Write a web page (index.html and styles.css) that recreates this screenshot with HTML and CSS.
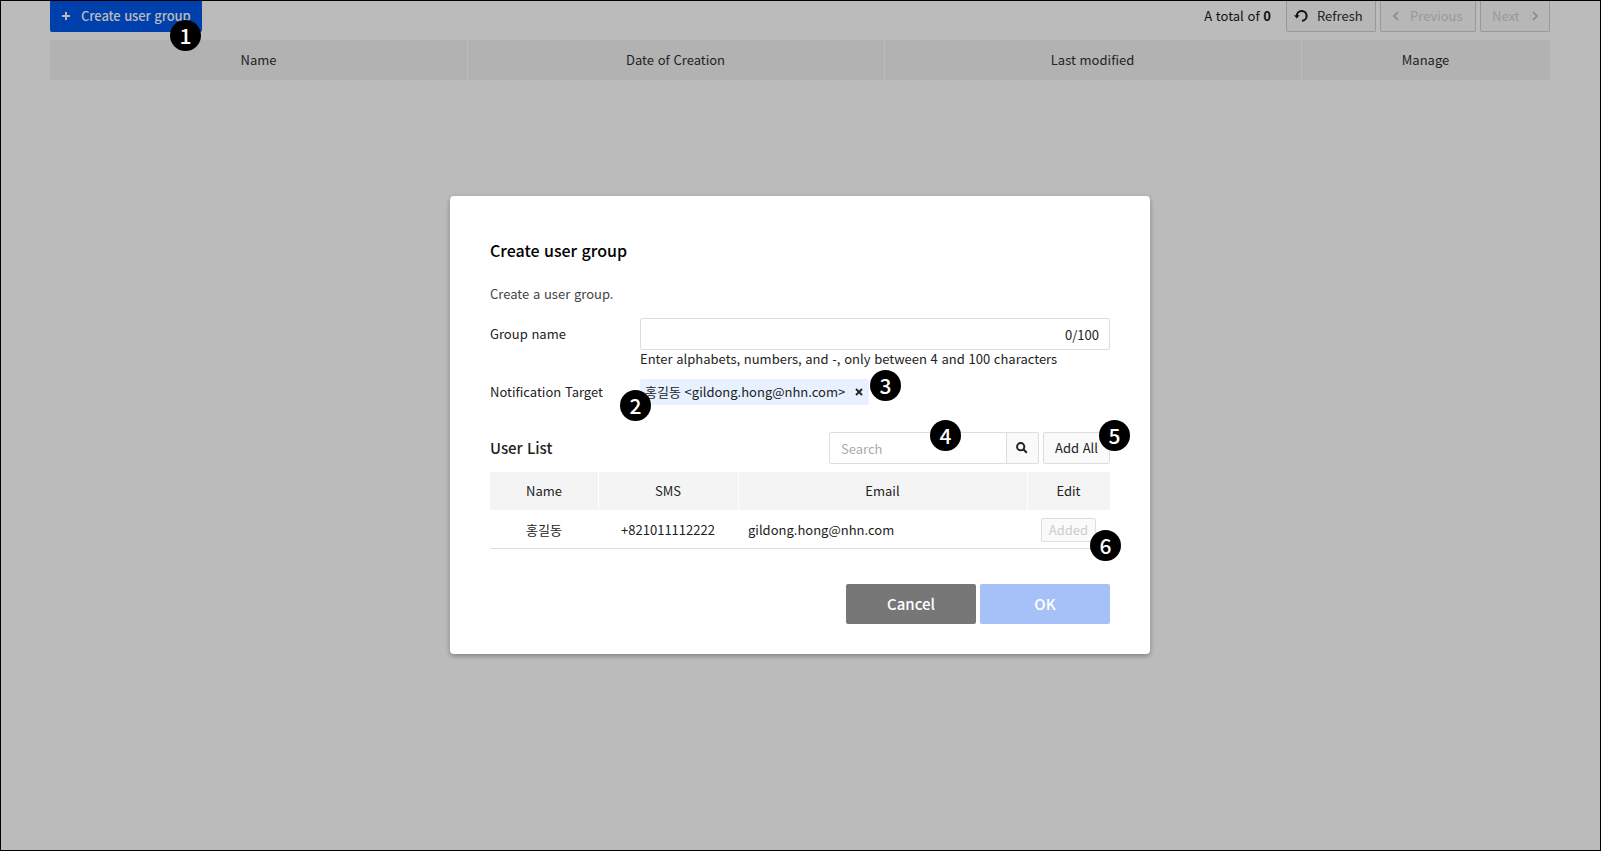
FILE: index.html
```html
<!DOCTYPE html>
<html lang="en">
<head>
<meta charset="utf-8">
<title>Create user group</title>
<link rel="stylesheet" href="styles.css">
</head>
<body>
<main class="page">
  <div class="toolbar">
    <button class="btn-create"><svg class="ico-plus" viewBox="0 0 8 8"><path d="M4 0v8M0 4h8"/></svg><span>Create user group</span></button>
    <span class="total">A total of <b>0</b></span>
    <button class="tool refresh"><svg class="ico-refresh" viewBox="0 0 14 14"><path d="M2.8 7.6V6.9a4.9 4.9 0 1 1 5.2 4.9" /><path class="fill" d="M0 6.2h5.6L2.8 9.4z"/></svg><span>Refresh</span></button>
    <button class="tool prev off"><svg class="ico-chev" viewBox="0 0 6 10"><path d="M5 1 1 5l4 4"/></svg><span>Previous</span></button>
    <button class="tool next off"><span>Next</span><svg class="ico-chev" viewBox="0 0 6 10"><path d="M1 1l4 4-4 4"/></svg></button>
  </div>
  <div class="groups-head">
    <div>Name</div><div>Date of Creation</div><div>Last modified</div><div>Manage</div>
  </div>
  <i class="badge b1">1</i>
</main>
<div class="overlay">
  <section class="modal">
    <h1 class="title">Create user group</h1>
    <p class="desc">Create a user group.</p>
    <div class="field">
      <label class="label">Group name</label>
      <div class="control">
        <div class="input">0/100</div>
        <div class="hint">Enter alphabets, numbers, and -, only between 4 and 100 characters</div>
      </div>
    </div>
    <div class="field target">
      <label class="label">Notification Target</label>
      <div class="chip"><span>홍길동 &lt;gildong.hong@nhn.com&gt;</span><svg class="ico-x" viewBox="0 0 8 8"><path d="M1 1l6 6M7 1 1 7"/></svg></div>
    </div>
    <div class="list-bar">
      <h2 class="subtitle">User List</h2>
      <div class="search">Search</div>
      <button class="search-btn"><svg class="ico-search" viewBox="0 0 12 12"><circle cx="4.7" cy="4.7" r="3.6"/><path d="M7.5 7.5l3.3 3.3"/></svg></button>
      <button class="add-all">Add All</button>
    </div>
    <div class="row head"><div>Name</div><div>SMS</div><div>Email</div><div>Edit</div></div>
    <div class="row user"><div>홍길동</div><div>+821011112222</div><div class="email">gildong.hong@nhn.com</div><div><button class="added">Added</button></div></div>
    <div class="actions"><button class="cancel">Cancel</button><button class="ok">OK</button></div>
    <i class="badge b2">2</i><i class="badge b3">3</i><i class="badge b4">4</i><i class="badge b5">5</i><i class="badge b6">6</i>
  </section>
</div>
</body>
</html>
```
FILE: styles.css
```css
* { box-sizing: border-box; margin: 0; padding: 0; }
body, button { font: 13px/20px "Noto Sans CJK KR", "Noto Sans", sans-serif; color: #222; word-spacing: .8px; }
svg { display: block; flex: none; fill: none; stroke: currentColor; }
.page { position: relative; width: 1601px; height: 851px; border: 1px solid #000; background: #bbb; padding: 0 50px 0 49px; overflow: hidden; }
.toolbar { display: flex; height: 31px; }
.btn-create { display: flex; align-items: center; width: 152px; height: 31px; padding: 0 0 1px 12px; border: 0; border-radius: 0 0 2px 2px; background: #0040ad; color: #bbb; font-weight: 500; letter-spacing: -.12px; white-space: nowrap; }
.ico-plus { width: 8px; height: 8px; margin-right: 11px; stroke-width: 2; }
.total { margin-left: auto; margin-right: 15px; line-height: 30px; color: #111; }
.tool { display: flex; align-items: center; height: 31px; border: 1px solid #999; border-top: 0; border-radius: 0 0 2px 2px; background: #b7b7b7; }
.refresh { width: 90px; padding-left: 7px; gap: 9px; margin-right: 4px; }
.prev { width: 96px; padding-left: 12px; gap: 11px; margin-right: 4px; }
.next { width: 70px; padding-left: 11px; gap: 12px; }
.off { color: #999; }
.off svg { color: #888; }
.ico-refresh { width: 14px; height: 14px; stroke-width: 2; color: #111; }
.ico-refresh .fill { fill: currentColor; stroke: none; }
.ico-chev { width: 6px; height: 10px; stroke-width: 1.6; }
.groups-head { display: grid; grid-template-columns: 417px 417px 417px 249px; width: 1500px; height: 40px; margin-top: 8px; text-align: center; line-height: 40px; background: #b2b2b2; }
.groups-head div + div { border-left: 1px solid #bdbdbd; padding-right: 1px; }

.overlay { position: absolute; left: 0; top: 0; width: 1600px; height: 850px; display: flex; align-items: center; justify-content: center; }
.modal { position: relative; width: 700px; height: 458px; padding: 39px 40px 40px; background: #fff; border-radius: 4px; box-shadow: 0 2px 5px rgba(0,0,0,.3); }
.title { font-size: 16px; font-weight: 500; line-height: 30px; color: #000; }
.desc { margin-top: 19px; color: #444; }
.field { display: flex; }
.label { width: 150px; line-height: 32px; }
.field:not(.target) { margin-top: 14px; }
.control { flex: 1; }
.input { height: 32px; padding: 1px 10px 0; border: 1px solid #ddd; border-radius: 2px; text-align: right; line-height: 30px; }
.hint { height: 19px; line-height: 17px; }
.target { margin-top: 10px; height: 26px; align-items: center; }
.chip { display: flex; align-items: center; justify-content: space-between; width: 229px; height: 26px; padding: 0 6px 0 5px; border-radius: 2px; background: #e8f1ff; white-space: nowrap; }
.ico-x { width: 8px; height: 8px; stroke-width: 1.8; }
.list-bar { display: flex; height: 32px; margin-top: 27px; }
.subtitle { flex: 1; font-size: 15px; font-weight: 500; line-height: 32px; }
.search { width: 178px; border: 1px solid #ddd; border-radius: 2px 0 0 2px; padding-left: 11px; line-height: 32px; color: #aaa; }
.search-btn { display: flex; justify-content: center; align-items: center; width: 33px; margin: 0 4px 0 -1px; padding-right: 1px; border: 1px solid #ddd; border-radius: 0 2px 2px 0; background: #fafafa; }
.ico-search { width: 12px; height: 12px; stroke-width: 2; }
.add-all { width: 67px; border: 1px solid #ddd; border-radius: 2px; background: #fafafa; }
.row { display: grid; grid-template-columns: 108px 140px 289px 83px; text-align: center; line-height: 38px; }
.head { height: 38px; margin-top: 8px; background: #f4f4f4; }
.head div + div { border-left: 1px solid #fff; padding-right: 1px; }
.user { height: 39px; line-height: 40px; border-bottom: 1px solid #ddd; }
.row .email { text-align: left; padding-left: 10px; }
.added { display: block; width: 55px; height: 24px; margin: 8px 0 0 14px; border: 1px solid #ddd; border-radius: 2px; background: #fafafa; color: #ccc; }
.actions { display: flex; justify-content: flex-end; gap: 4px; margin-top: 35px; }
.actions button { width: 130px; height: 40px; border: 0; border-radius: 2px; color: #fff; font-size: 15px; font-weight: 500; background: #777; }
.actions .ok { background: #a6c1f8; }

.badge { position: absolute; width: 31px; height: 31px; border-radius: 50%; background: #000; color: #fff; font-size: 21px; font-weight: 500; font-style: normal; line-height: 31px; text-align: center; }
.b1 { left: 169px; top: 19px; }
.b2 { left: 170px; top: 194px; }
.b3 { left: 420px; top: 174px; }
.b4 { left: 480px; top: 224px; }
.b5 { left: 649px; top: 224px; }
.b6 { left: 640px; top: 334px; }
```
